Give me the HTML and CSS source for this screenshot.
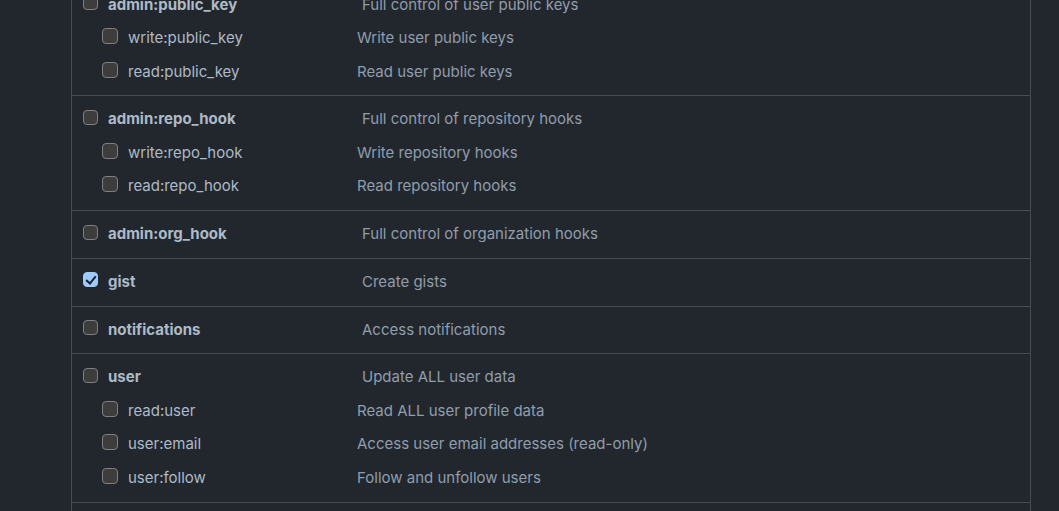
FILE: index.html
```html
<!DOCTYPE html>
<html lang="en">
<head>
<meta charset="utf-8">
<title>Token scopes</title>
<link rel="stylesheet" href="styles.css">
</head>
<body>
<div class="scopes">
  <div class="group first">
    <div class="row top"><label class="name"><input type="checkbox"><strong>admin:public_key</strong></label><span class="desc">Full control of user public keys</span></div>
    <div class="row sub"><label class="name"><input type="checkbox"><span>write:public_key</span></label><span class="desc">Write user public keys</span></div>
    <div class="row sub"><label class="name"><input type="checkbox"><span>read:public_key</span></label><span class="desc">Read user public keys</span></div>
  </div>
  <div class="group">
    <div class="row top"><label class="name"><input type="checkbox"><strong>admin:repo_hook</strong></label><span class="desc">Full control of repository hooks</span></div>
    <div class="row sub"><label class="name"><input type="checkbox"><span>write:repo_hook</span></label><span class="desc">Write repository hooks</span></div>
    <div class="row sub"><label class="name"><input type="checkbox"><span>read:repo_hook</span></label><span class="desc">Read repository hooks</span></div>
  </div>
  <div class="group">
    <div class="row top"><label class="name"><input type="checkbox"><strong>admin:org_hook</strong></label><span class="desc">Full control of organization hooks</span></div>
  </div>
  <div class="group">
    <div class="row top"><label class="name"><input type="checkbox" checked><strong>gist</strong></label><span class="desc">Create gists</span></div>
  </div>
  <div class="group">
    <div class="row top"><label class="name"><input type="checkbox"><strong>notifications</strong></label><span class="desc">Access notifications</span></div>
  </div>
  <div class="group">
    <div class="row top"><label class="name"><input type="checkbox"><strong>user</strong></label><span class="desc">Update ALL user data</span></div>
    <div class="row sub"><label class="name"><input type="checkbox"><span>read:user</span></label><span class="desc">Read ALL user profile data</span></div>
    <div class="row sub"><label class="name"><input type="checkbox"><span>user:email</span></label><span class="desc">Access user email addresses (read-only)</span></div>
    <div class="row sub"><label class="name"><input type="checkbox"><span>user:follow</span></label><span class="desc">Follow and unfollow users</span></div>
  </div>
  <div class="group last"></div>
</div>
</body>
</html>
```
FILE: styles.css
```css
html, body {
  margin: 0;
  padding: 0;
  background: #22272e;
  height: 100%;
  overflow: hidden;
}

body {
  font-family: Inter, "Liberation Sans", Arial, sans-serif;
  font-size: 15px;
  color: #adbac7;
}

.scopes {
  margin-left: 71px;
  width: 958px;
  margin-top: -19.5px;
  border-left: 1px solid #444c56;
  border-right: 1px solid #444c56;
  min-height: 600px;
}

.group {
  border-top: 1px solid #444c56;
  padding: 12px 0 12.75px;
  display: flex;
  flex-direction: column;
  gap: 11.5px;
}

.row {
  display: flex;
  align-items: center;
  line-height: 22px;
  height: 22px;
}

.name {
  display: flex;
  align-items: center;
  flex: none;
}

.top .name {
  margin-left: 11px;
  width: 279px;
}

.sub .name {
  margin-left: 30px;
  width: 255px;
}

.name strong {
  font-weight: 700;
  color: #adbac7;
}

.name span {
  color: #adbac7;
}

.desc {
  color: #909dab;
}

input[type="checkbox"] {
  appearance: none;
  -webkit-appearance: none;
  margin: 0 10px 4px 0;
  width: 15px;
  height: 15px;
  box-sizing: border-box;
  border: 1px solid #808080;
  border-radius: 4px;
  background: #3d3d3d;
  flex: none;
  position: relative;
}

.sub input[type="checkbox"] {
  width: 16px;
  height: 16px;
}

input[type="checkbox"]:checked {
  background: #9ccbff;
  border-color: #9ccbff;
}

input[type="checkbox"]:checked::after {
  content: "";
  position: absolute;
  left: 4px;
  top: 1px;
  width: 4px;
  height: 8px;
  border: solid #1c2128;
  border-width: 0 2.5px 2.5px 0;
  transform: rotate(40deg);
}
```
